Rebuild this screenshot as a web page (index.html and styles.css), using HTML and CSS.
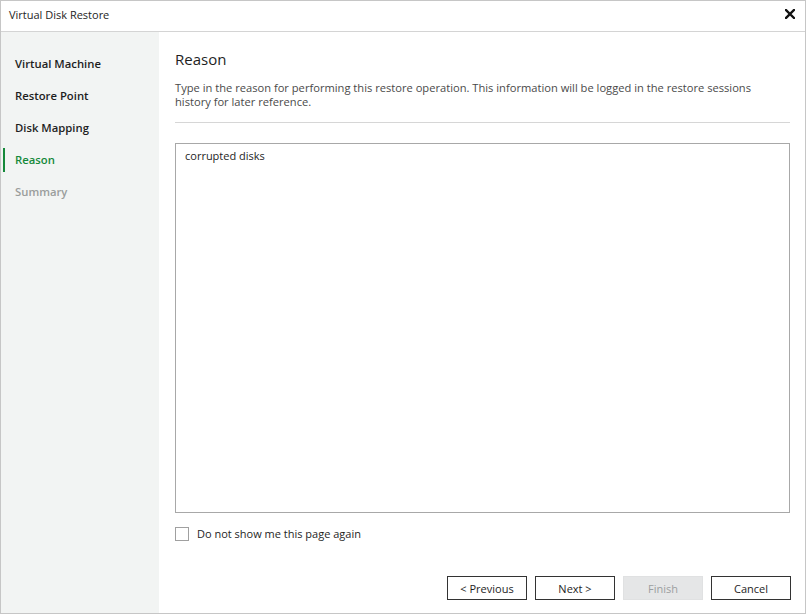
FILE: index.html
```html
<!DOCTYPE html>
<html>
<head>
<meta charset="utf-8">
<link rel="stylesheet" href="styles.css">
</head>
<body>
<div class="window">
  <div class="titlebar">
    <span class="title">Virtual Disk Restore</span>
    <svg class="close" width="10" height="10" viewBox="0 0 10 10"><path d="M1 1L9 9M9 1L1 9" stroke="#111" stroke-width="2.4" stroke-linecap="square"/></svg>
  </div>
  <div class="body">
    <nav class="sidebar">
      <div class="step">Virtual Machine</div>
      <div class="step">Restore Point</div>
      <div class="step">Disk Mapping</div>
      <div class="step active">Reason</div>
      <div class="step disabled">Summary</div>
    </nav>
    <main class="content">
      <h1 class="heading">Reason</h1>
      <p class="desc">Type in the reason for performing this restore operation. This information will be logged in the restore sessions history for later reference.</p>
      <div class="divider"></div>
      <div class="textbox">corrupted disks</div>
      <label class="check"><span class="box"></span><span>Do not show me this page again</span></label>
      <div class="buttons">
        <div class="btn">&lt; Previous</div>
        <div class="btn">Next &gt;</div>
        <div class="btn disabled">Finish</div>
        <div class="btn">Cancel</div>
      </div>
    </main>
  </div>
</div>
</body>
</html>
```
FILE: styles.css
```css
* { box-sizing: border-box; }
html, body { margin: 0; padding: 0; background: #fff; }
body {
  font-family: "Open Sans", "Noto Sans", sans-serif;
  font-size: 11px;
  color: #1e1e1e;
}
.window {
  width: 806px;
  height: 614px;
  border: 1px solid #c6c6c6;
  display: flex;
  flex-direction: column;
  background: #fff;
}
.titlebar {
  height: 31px;
  border-bottom: 1px solid #d4d4d4;
  display: flex;
  align-items: center;
  justify-content: space-between;
  padding: 0 10px 4px 8px;
  flex: none;
}
.title { font-size: 11px; color: #1e1e1e; }
.body {
  flex: 1;
  display: flex;
  min-height: 0;
}
.sidebar {
  width: 158px;
  background: #f2f4f3;
  padding-top: 20px;
  display: flex;
  flex-direction: column;
  gap: 8px;
  flex: none;
}
.step {
  height: 24px;
  line-height: 24px;
  padding-left: 10px;
  font-size: 11.3px;
  font-weight: 600;
  color: #1e1e1e;
  margin-left: 2px;
  border-left: 2px solid transparent;
}
.step.active { color: #15893a; border-left-color: #15893a; }
.step.disabled { color: #9a9d9c; }
.content {
  flex: 1;
  padding: 0 15px 0 16px;
  display: flex;
  flex-direction: column;
}
.heading {
  margin: 16px 0 0 0;
  font-size: 15px;
  font-weight: 400;
  line-height: 22px;
  color: #1e1e1e;
}
.desc {
  margin: 11px 0 0 0;
  line-height: 14px;
  color: #4a4a4a;
  font-size: 11.15px;
  padding-right: 30px;
}
.divider {
  margin-top: 13px;
  height: 1px;
  background: #d6d6d6;
}
.textbox {
  margin-top: 20px;
  height: 370px;
  border: 1px solid #a8a8a8;
  padding: 4px 9px;
  line-height: 16px;
  color: #1e1e1e;
}
.check {
  margin-top: 13px;
  display: flex;
  align-items: center;
  gap: 8px;
  color: #1e1e1e;
}
.box {
  width: 14px;
  height: 14px;
  border: 1px solid #a0a0a0;
  background: #fff;
}
.buttons {
  margin-top: auto;
  margin-bottom: 13px;
  display: flex;
  justify-content: flex-end;
  gap: 8px;
  margin-right: -1px;
}
.btn {
  width: 80px;
  height: 24px;
  border: 1px solid #333;
  display: flex;
  align-items: center;
  justify-content: center;
  color: #1e1e1e;
  background: #fff;
}
.btn.disabled {
  background: #e5e6e7;
  border-color: #e0e1e2;
  color: #9c9ea0;
}
```
